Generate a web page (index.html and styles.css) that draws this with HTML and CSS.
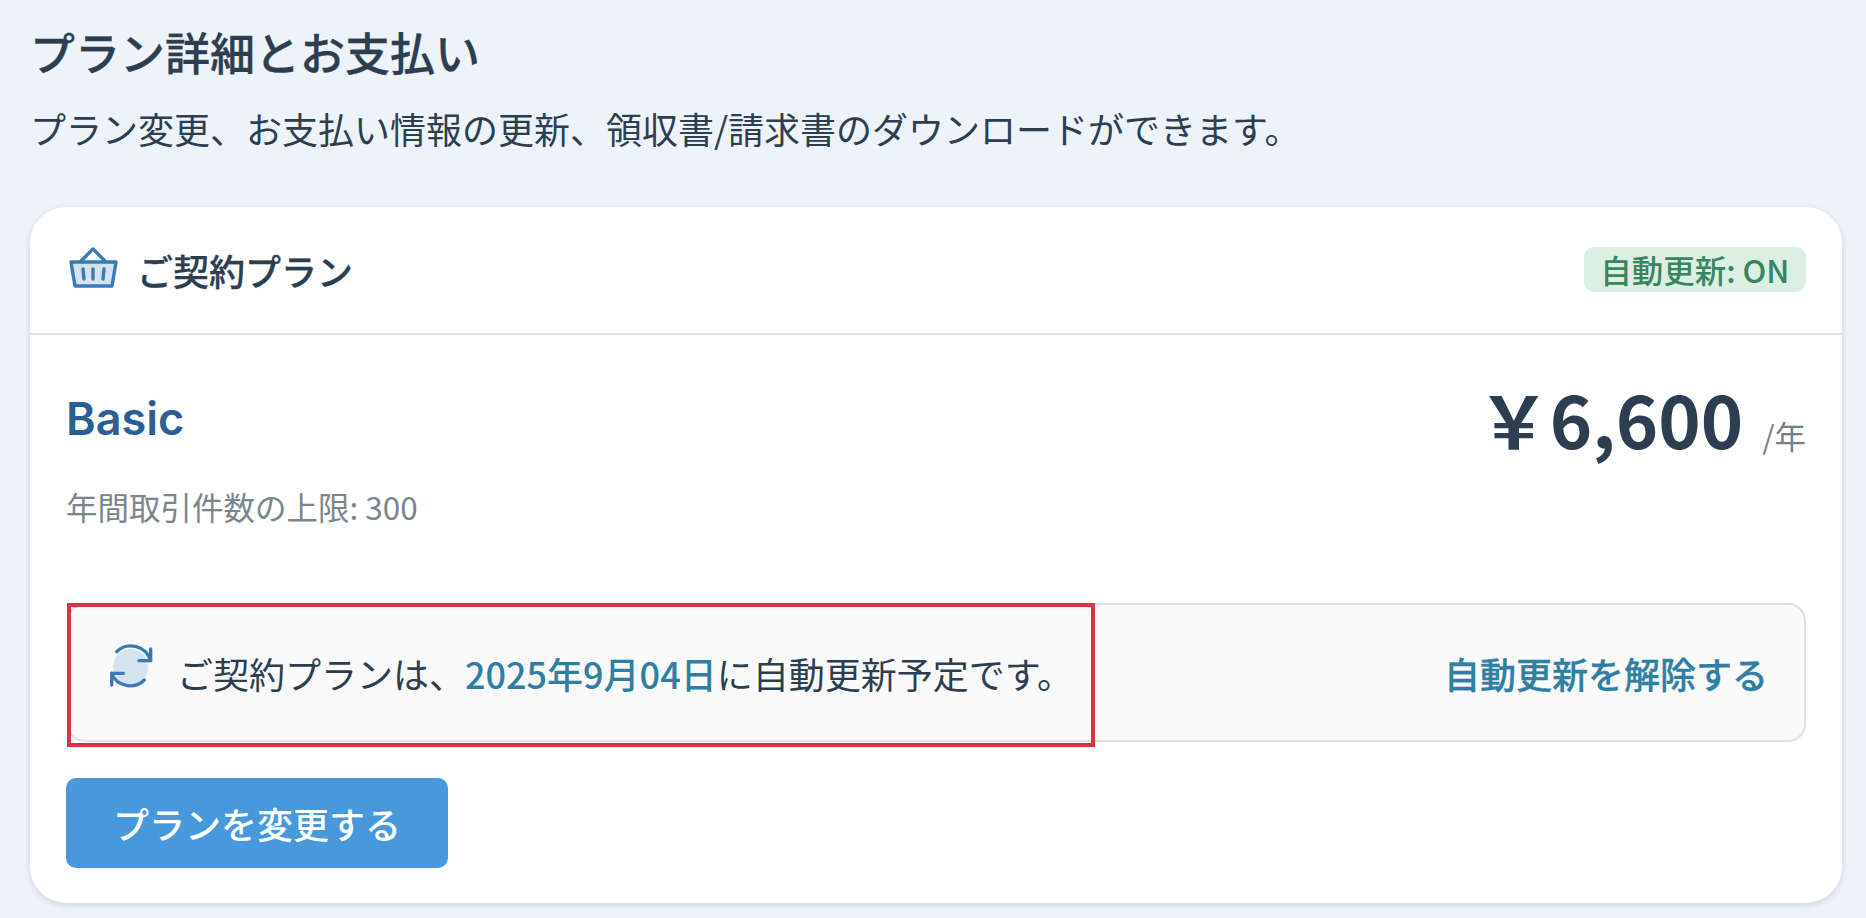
FILE: index.html
```html
<!DOCTYPE html>
<html lang="ja">
<head>
<meta charset="utf-8">
<title>プラン詳細とお支払い</title>
<link rel="stylesheet" href="styles.css">
</head>
<body>
<main class="page">
  <h1 class="title">プラン詳細とお支払い</h1>
  <p class="lead">プラン変更、お支払い情報の更新、領収書/請求書のダウンロードができます。</p>
  <section class="card">
    <header class="card-head">
      <div class="head-left">
        <svg class="basket" viewBox="0 0 70 50" width="70" height="50" aria-hidden="true">
          <path class="duo" d="M11 21H56L52 45H15Z"/>
          <path class="line" d="M11 21H56L52 45H15Z"/>
          <path class="line" d="M21 20L33 8L45 20"/>
          <path class="line" d="M23 28L24 38M33 28V38M44 28L43 38"/>
        </svg>
        <h2 class="card-title">ご契約プラン</h2>
      </div>
      <span class="badge">自動更新: ON</span>
    </header>
    <div class="card-body">
      <div class="plan-row">
        <div class="plan-info">
          <div class="plan-name">Basic</div>
          <div class="plan-limit">年間取引件数の上限: 300</div>
        </div>
        <div class="plan-price"><span class="amount">￥6,600</span><span class="per">/年</span></div>
      </div>
      <div class="notice">
        <div class="notice-left">
          <svg class="refresh" viewBox="45 30 180 150" width="60" height="50" aria-hidden="true">
            <circle class="duo" cx="122" cy="110" r="53"/>
            <path class="line" d="M147 92H182V57"/>
            <path class="line" d="M80 65A62 62 0 0 1 182 92"/>
            <path class="line" d="M100 130H65V165"/>
            <path class="line" d="M163 150A60 60 0 0 1 65 130"/>
          </svg>
          <span class="notice-text">ご契約プランは、<span class="date">2025年9月04日</span>に自動更新予定です。</span>
        </div>
        <a class="cancel" href="#">自動更新を解除する</a>
        <div class="highlight"></div>
      </div>
      <button class="change" type="button">プランを変更する</button>
    </div>
  </section>
</main>
</body>
</html>
```
FILE: styles.css
```css
* { box-sizing: border-box; }
html, body { margin: 0; height: 100%; }
body {
  background: #eef2f9;
  color: #2c3e50;
  font-family: "Noto Sans CJK JP", "Noto Sans", sans-serif;
  overflow: hidden;
}
.page { padding: 22px 24px 0 30px; }
.title { margin: 0; font-size: 45px; line-height: 60px; font-weight: 500; -webkit-text-stroke: .3px #2c3e50; }
.lead { margin: 21px 0 54px; font-size: 36px; line-height: 50px; font-weight: 400; }
.card {
  background: #fff;
  border-radius: 36px;
  height: 696px;
  box-shadow: 0 2px 6px rgba(60, 80, 110, .18);
}
.card-head {
  height: 128px;
  padding: 0 36px 2px 30px;
  display: flex;
  align-items: center;
  justify-content: space-between;
  border-bottom: 2px solid #e2e4e8;
}
.head-left { display: flex; align-items: center; }
.basket { margin-bottom: 7px; margin-right: 7px; }
.duo { fill: #d5e2f0; stroke: none; }
.line { fill: none; stroke: #3b7bb5; stroke-width: 3.4; stroke-linecap: round; stroke-linejoin: round; }
.refresh .line { stroke-width: 10; }
.card-title { margin: 2px 0 0; font-size: 36px; line-height: 50px; font-weight: 500; -webkit-text-stroke: .3px #2c3e50; }
.badge {
  background: #dcefe3;
  color: #38855f;
  font-size: 31.5px;
  line-height: 45px;
  font-weight: 500;
  border-radius: 10px;
  padding: 0 16.5px;
}
.card-body { padding: 47px 36px 0 36px; }
.plan-row { display: flex; justify-content: space-between; align-items: flex-start; height: 221px; }
.plan-info { padding-top: 7px; }
.plan-name { font-family: Inter, "Noto Sans", sans-serif; font-size: 45px; line-height: 60px; font-weight: 600; color: #2a5f96; }
.plan-limit { margin-top: 37px; font-size: 31.5px; line-height: 40px; color: #7b868c; }
.plan-price { display: flex; align-items: baseline; margin-top: -4px; }
.amount { font-size: 72px; line-height: 80px; font-weight: 700; }
.per { margin-left: 19px; font-size: 31.5px; color: #777f86; }
.notice {
  position: relative;
  margin-left: 1px;
  height: 139px;
  display: flex;
  align-items: center;
  justify-content: space-between;
  padding: 0 36px;
  background: #fafafa;
  border: 2px solid #e0e0e0;
  border-radius: 18px;
}
.notice-left { display: flex; align-items: center; }
.refresh { margin-bottom: 15px; margin-right: 12px; }
.notice-text { font-size: 36px; line-height: 50px; }
.date { color: #2d7fa3; font-weight: 500; }
.cancel { color: #2d7fa3; font-size: 36px; line-height: 50px; font-weight: 500; -webkit-text-stroke: .3px #2d7fa3; text-decoration: none; }
.highlight {
  position: absolute;
  left: -2px;
  top: -2px;
  width: 1028px;
  height: 144px;
  border: 4.5px solid #d63546;
}
.change {
  display: block;
  margin-top: 36px;
  width: 382px;
  height: 90px;
  background: #4798dc;
  color: #fff;
  border: 0;
  border-radius: 10px;
  font-family: inherit;
  font-size: 36px;
  font-weight: 500;
}
```
